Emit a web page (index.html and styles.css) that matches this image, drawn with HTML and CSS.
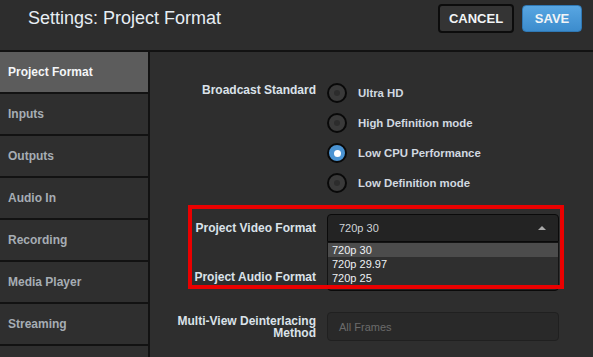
FILE: index.html
```html
<!DOCTYPE html>
<html>
<head>
<meta charset="utf-8">
<link rel="stylesheet" href="styles.css">
</head>
<body>
<header class="topbar">
  <h1 class="title">Settings: Project Format</h1>
  <div class="actions">
    <button class="btn btn-cancel">CANCEL</button>
    <button class="btn btn-save">SAVE</button>
  </div>
</header>
<div class="layout">
  <nav class="sidebar">
    <div class="nav-item active">Project Format</div>
    <div class="nav-item">Inputs</div>
    <div class="nav-item">Outputs</div>
    <div class="nav-item">Audio In</div>
    <div class="nav-item">Recording</div>
    <div class="nav-item">Media Player</div>
    <div class="nav-item">Streaming</div>
    <div class="nav-item"></div>
  </nav>
  <main class="content">
    <div class="form">
      <div class="label label-top">Broadcast Standard</div>
      <div class="radios">
        <div class="radio"><span class="dot"></span><span class="radio-text">Ultra HD</span></div>
        <div class="radio"><span class="dot"></span><span class="radio-text">High Definition mode</span></div>
        <div class="radio"><span class="dot checked"></span><span class="radio-text">Low CPU Performance</span></div>
        <div class="radio"><span class="dot"></span><span class="radio-text">Low Definition mode</span></div>
      </div>

      <div class="label">Project Video Format</div>
      <div class="select-wrap">
        <div class="select open"><span>720p 30</span><span class="arrow"></span></div>
        <ul class="options">
          <li class="option hover">720p 30</li>
          <li class="option">720p 29.97</li>
          <li class="option">720p 25</li>
        </ul>
      </div>

      <div class="label">Project Audio Format</div>
      <div class="select"></div>

      <div class="label">Multi-View Deinterlacing Method</div>
      <div class="select disabled"><span>All Frames</span></div>
    </div>
    <div class="highlight-box"></div>
  </main>
</div>
</body>
</html>
```

FILE: styles.css
```css
* { box-sizing: border-box; }

html, body {
  margin: 0;
  padding: 0;
  width: 593px;
  height: 357px;
  overflow: hidden;
  background: #121212;
  font-family: "Liberation Sans", Arial, sans-serif;
}

.topbar {
  height: 52px;
  background: #2d2d2d;
  border-bottom: 2px solid #121212;
  display: flex;
  align-items: flex-start;
  justify-content: space-between;
  padding: 4px 11px 0 28px;
}

.title {
  margin: 0;
  font-size: 18px;
  font-weight: normal;
  line-height: 29px;
  color: #e7eef4;
}

.actions {
  display: flex;
  gap: 8px;
  align-items: center;
  height: 29px;
}

.btn {
  font-family: "Liberation Sans", Arial, sans-serif;
  font-weight: bold;
  font-size: 13px;
  color: #f2f4f6;
  border-radius: 4px;
  padding: 0;
  cursor: pointer;
}

.btn-cancel {
  width: 76px;
  height: 29px;
  background: #343434;
  border: 2px solid #0c0c0c;
}

.btn-save {
  width: 60px;
  height: 27px;
  background: linear-gradient(#58a6e2, #3c8ccd);
  border: 1px solid #2f78b4;
}

.layout {
  display: flex;
  gap: 2px;
  height: 305px;
  overflow: hidden;
}

.sidebar {
  width: 148px;
  display: flex;
  flex-direction: column;
  gap: 2px;
  flex-shrink: 0;
  overflow: hidden;
}

.nav-item {
  height: 40px;
  flex-shrink: 0;
  background: #2f2f2f;
  color: #a6adb4;
  font-size: 12px;
  font-weight: bold;
  display: flex;
  align-items: center;
  padding-left: 8px;
}

.nav-item.active {
  background: #5c5c5c;
  color: #f4f6f8;
}

.content {
  flex: 1;
  background: #2e2e2e;
  position: relative;
  padding: 31px 0 0 26px;
}

.form {
  display: grid;
  grid-template-columns: 140px 232px;
  column-gap: 11px;
  row-gap: 21px;
  align-items: center;
}

.label {
  font-size: 12px;
  font-weight: bold;
  color: #dbe2e9;
  text-align: right;
  line-height: 12px;
}

.label-top {
  align-self: start;
  line-height: 14px;
}

.radios {
  display: flex;
  flex-direction: column;
  gap: 10px;
}

.radio {
  display: flex;
  align-items: center;
  gap: 11px;
  height: 20px;
}

.dot {
  width: 20px;
  height: 20px;
  border-radius: 50%;
  border: 2px solid #090909;
  background: #3a3a3a;
  display: flex;
  align-items: center;
  justify-content: center;
}

.dot::after {
  content: "";
  width: 6px;
  height: 6px;
  border-radius: 50%;
  background: #2c2c2c;
}

.dot.checked {
  background: #4a93d2;
}

.dot.checked::after {
  width: 7px;
  height: 7px;
  background: #ffffff;
}

.radio-text {
  font-size: 11.4px;
  font-weight: bold;
  color: #d2d9e0;
}

.select-wrap {
  position: relative;
}

.select {
  height: 28px;
  background: #232323;
  border: 1px solid #0a0a0a;
  border-radius: 4px;
  display: flex;
  align-items: center;
  justify-content: space-between;
  padding: 0 10px 0 11px;
  font-size: 11px;
  color: #cfd3d7;
}

.select.open {
  border-radius: 4px 4px 0 0;
}

.arrow {
  width: 0;
  height: 0;
  border-left: 4px solid transparent;
  border-right: 4px solid transparent;
  border-bottom: 4px solid #a9a9a9;
  margin-right: 2px;
}

.select.disabled {
  height: 29px;
  background: #292929;
  border-color: #202020;
  color: #6b6b6b;
}

.options {
  position: absolute;
  top: 28px;
  left: 0;
  right: 0;
  margin: 0;
  padding: 0;
  list-style: none;
  background: #2f2f2f;
  border: 1px solid #141414;
  z-index: 2;
}

.option {
  height: 14px;
  line-height: 14px;
  font-size: 11px;
  color: #eef1f4;
  padding-left: 4px;
}

.option.hover {
  background: #4c4c4c;
}

.highlight-box {
  position: absolute;
  left: 38px;
  top: 153px;
  width: 376px;
  height: 84px;
  border: 4px solid #ea0000;
  z-index: 3;
  pointer-events: none;
}
```
